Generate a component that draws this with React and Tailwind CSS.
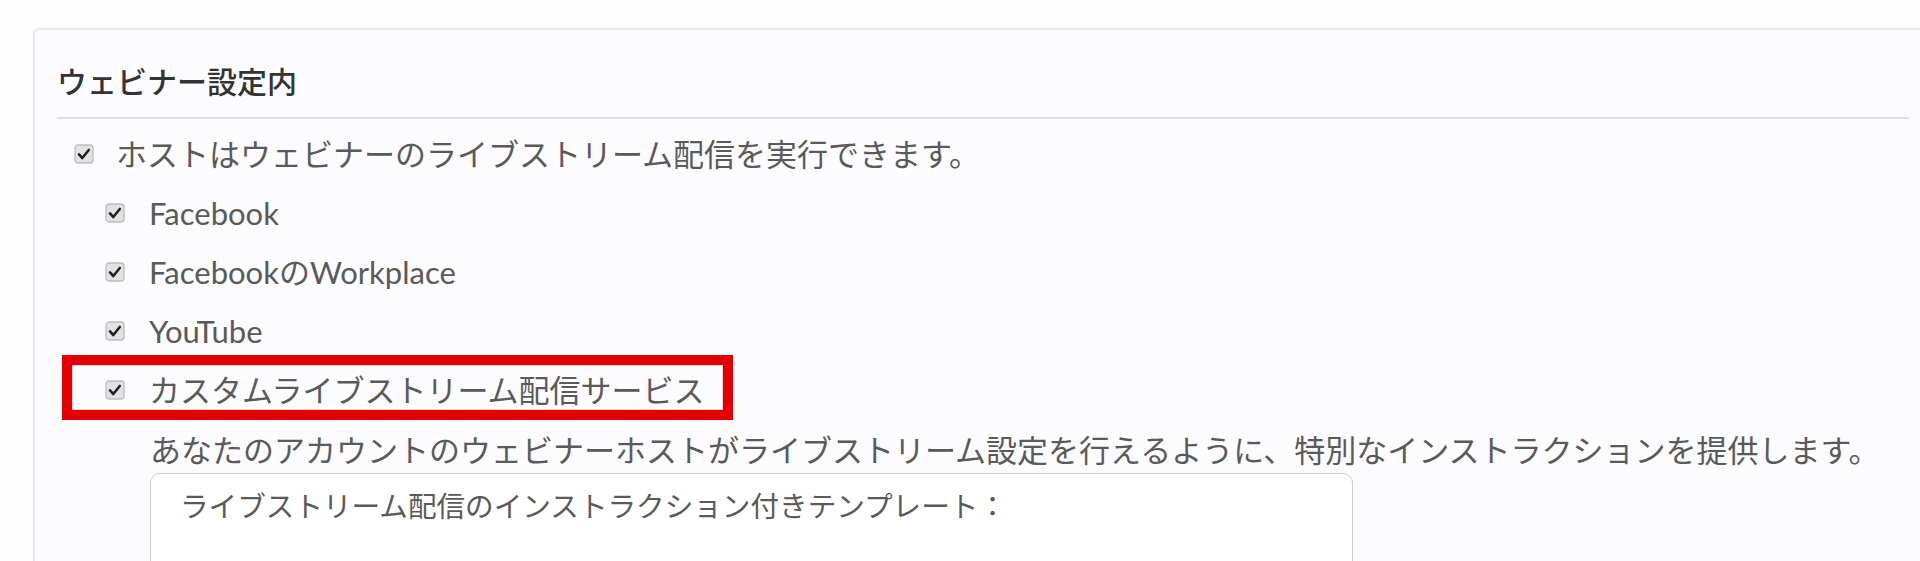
import React from 'react'

const font = { fontFamily: 'Lato, "Noto Sans CJK JP", sans-serif' }

function Check() {
  return (
    <svg width="20" height="20" viewBox="0 0 20 20" className="shrink-0">
      <rect x="1" y="1" width="18" height="18" rx="3" fill="#e2e2e4" stroke="#bdbdc0" strokeWidth="1.3" />
      <path d="M5 10.4 L8.3 14 L14.8 6" fill="none" stroke="#222" strokeWidth="2.6" strokeLinecap="round" strokeLinejoin="round" />
    </svg>
  )
}

function Row({ children, nested, highlight }) {
  return (
    <div className={`relative flex items-center h-[59px] ${nested ? 'ml-[31px] gap-[24px]' : 'gap-[22px]'}`}>
      {highlight && (
        <div className="absolute -left-[43px] -top-[5px] w-[671px] h-[65px] border-[10px] border-[#e40000] shadow-[inset_0_0_0_1px_#f6d0d0]" />
      )}
      <Check />
      <span className="text-[31px] leading-[36px] text-[#5a5a5a] whitespace-nowrap">{children}</span>
    </div>
  )
}

export default function App() {
  return (
    <div className="h-[561px] overflow-hidden bg-[#fdfdfd] pt-[28px] pl-[33px]" style={font}>
      <div className="w-[1900px] h-[600px] bg-[#fcfbfd] border-2 border-[#e8e7ec] rounded-md">
        <div className="mx-[22px] pt-[35px] pb-[19px] border-b-2 border-[#dedde2]">
          <h1 className="text-[30px] leading-[33px] font-medium text-[#333]">ウェビナー設定内</h1>
        </div>

        <div className="pl-[39px] pt-[5px]">
          <Row>ホストはウェビナーのライブストリーム配信を実行できます。</Row>
          <Row nested>Facebook</Row>
          <Row nested>FacebookのWorkplace</Row>
          <Row nested>YouTube</Row>
          <Row nested highlight>カスタムライブストリーム配信サービス</Row>

          <div className="ml-[76px]">
            <p className="pt-[13px] text-[31px] leading-[36px] text-[#5a5a5a] whitespace-nowrap">
              あなたのアカウントのウェビナーホストがライブストリーム設定を行えるように、特別なインストラクションを提供します。
            </p>
            <div className="mt-[5px] w-[1203px] h-[160px] bg-white border border-[#cfcfd2] rounded-[10px] pl-[29px] pt-[17px]">
              <span className="text-[28.6px] leading-[30px] text-[#5a5a5a]">ライブストリーム配信のインストラクション付きテンプレート：</span>
            </div>
          </div>
        </div>
      </div>
    </div>
  )
}
